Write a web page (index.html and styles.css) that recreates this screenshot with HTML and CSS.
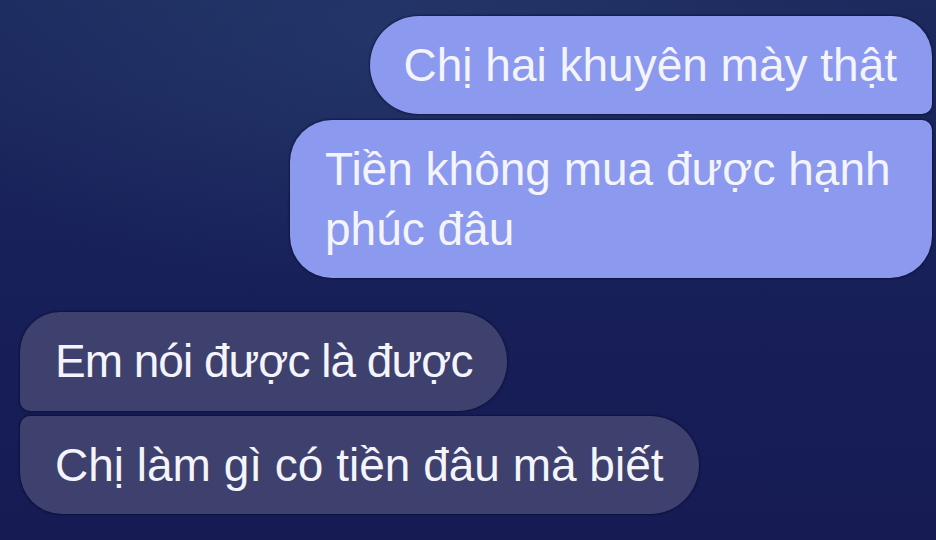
FILE: index.html
```html
<!DOCTYPE html>
<html lang="vi">
<head>
<meta charset="utf-8">
<title>Chat</title>
<link rel="stylesheet" href="styles.css">
</head>
<body>
<main class="chat">
  <div class="group sent">
    <div class="bubble first">Chị hai khuyên mày thật</div>
    <div class="bubble last wide">Tiền không mua được hạnh phúc đâu</div>
  </div>
  <div class="group received">
    <div class="bubble first tight">Em nói được là được</div>
    <div class="bubble last">Chị làm gì có tiền đâu mà biết</div>
  </div>
</main>
</body>
</html>
```
FILE: styles.css
```css
html, body {
  margin: 0;
  padding: 0;
  width: 936px;
  height: 540px;
  overflow: hidden;
}
body {
  background:
    radial-gradient(ellipse 520px 260px at 380px 30px, rgba(40, 62, 112, 0.6), rgba(40, 62, 112, 0) 100%),
    linear-gradient(180deg, #1c2a5e 0%, #18215a 40%, #161b54 100%);
  font-family: "Liberation Sans", Arial, sans-serif;
  color: #f4f4fd;
}
.chat {
  display: flex;
  flex-direction: column;
  gap: 34px;
  padding: 16px 4px 0 20px;
}
.group {
  display: flex;
  flex-direction: column;
  gap: 6px;
}
.sent { align-items: flex-end; }
.received { align-items: flex-start; gap: 5px; }
.bubble {
  font-size: 46px;
  line-height: 60px;
  padding: 19px 35px 19px 34px;
  box-shadow: 0 0 2px 1px rgba(8, 10, 36, 0.55);
}
.sent .bubble {
  background: #8b99ef;
}
.sent .bubble.wide {
  max-width: 572px;
  padding-left: 35px;
}
.sent .first { border-radius: 49px 40px 10px 49px; }
.sent .last { border-radius: 42px 10px 42px 42px; }
.received .bubble {
  background: #3e406e;
  padding: 19px 35px 20px 35px;
}
.received .tight { letter-spacing: -1px; }
.received .first { border-radius: 40px 49px 49px 10px; }
.received .last { border-radius: 10px 49px 49px 42px; padding: 19px 35px 19px 35px; }
```
